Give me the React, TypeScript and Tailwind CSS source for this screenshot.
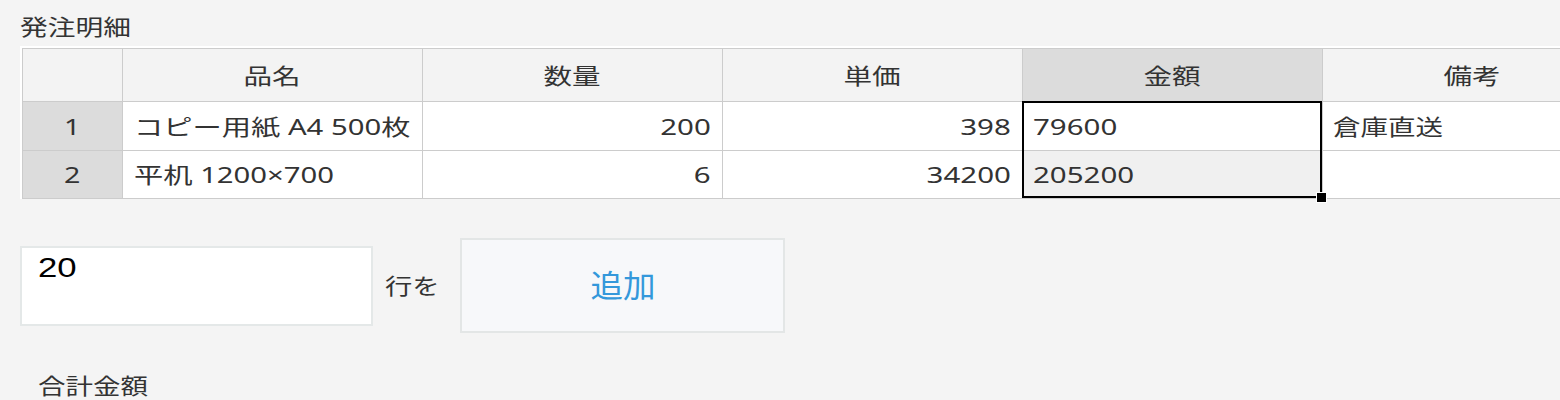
import React from "react";

const FONT = { fontFamily: '"Noto Sans", "Noto Sans CJK JP", sans-serif' };

type Row = {
  n: number;
  name: string;
  qty: string;
  price: string;
  amount: string;
  note: string;
};

const rows: Row[] = [
  { n: 1, name: "コピー用紙 A4 500枚", qty: "200", price: "398", amount: "79600", note: "倉庫直送" },
  { n: 2, name: "平机 1200×700", qty: "6", price: "34200", amount: "205200", note: "" },
];

const headers = ["品名", "数量", "単価", "金額", "備考"];

export default function App() {
  return (
    <div
      className="min-h-screen w-full overflow-hidden bg-[#f4f4f4] pl-5 pt-[7px] text-[#333333]"
      style={FONT}
    >
      <div className="text-[22px] leading-[39px]">
        <span className="inline-block origin-left scale-x-[1.26]">発注明細</span>
      </div>

      {/* Grid */}
      <div className="relative w-max border-l-2 border-t-2 border-white">
        {/* header row */}
        <div className="flex h-[54px] text-[22px]">
          <div className="h-full w-[101px] border-x border-y border-[#cccccc] bg-[#f3f3f3]" />
          {headers.map((h) => (
            <div
              key={h}
              className={
                h === "金額"
                  ? "flex h-full w-[300px] items-center justify-center border-y border-r border-[#cccccc] bg-[#dcdcdc]"
                  : "flex h-full w-[300px] items-center justify-center border-y border-r border-[#cccccc] bg-[#f3f3f3]"
              }
            >
              <span className="inline-block scale-x-[1.3]">{h}</span>
            </div>
          ))}
        </div>
        {rows.map((r, i) => (
          <div
            key={r.n}
            className={i === 0 ? "flex h-[49px] text-[22px]" : "flex h-[48px] text-[22px]"}
          >
            <div className="flex h-full w-[101px] items-center justify-center border-x border-b border-[#cccccc] bg-[#dcdcdc]">
              <span className="inline-block scale-x-[1.3]">{r.n}</span>
            </div>
            <div className="flex h-full w-[300px] items-center border-b border-r border-[#cccccc] bg-white pl-[11px]">
              <span className="inline-block origin-left scale-x-[1.33]">{r.name}</span>
            </div>
            <div className="flex h-full w-[300px] items-center justify-end border-b border-r border-[#cccccc] bg-white pr-[11px]">
              <span className="inline-block origin-right scale-x-[1.34]">{r.qty}</span>
            </div>
            <div className="flex h-full w-[300px] items-center justify-end border-b border-r border-[#cccccc] bg-white pr-[11px]">
              <span className="inline-block origin-right scale-x-[1.34]">{r.price}</span>
            </div>
            <div
              className={
                i === 0
                  ? "flex h-full w-[300px] items-center border-b border-r border-[#cccccc] bg-white pl-[10px]"
                  : "flex h-full w-[300px] items-center border-b border-r border-[#cccccc] bg-[#f0f0f0] pl-[10px]"
              }
            >
              <span className="inline-block origin-left scale-x-[1.34]">{r.amount}</span>
            </div>
            <div className="flex h-full w-[300px] items-center border-b border-r border-[#cccccc] bg-white pl-[10px]">
              <span className="inline-block origin-left scale-x-[1.25]">{r.note}</span>
            </div>
          </div>
        ))}

        {/* selection overlay */}
        <div className="pointer-events-none absolute left-[1000px] top-[53px] h-[97px] w-[300px] border-2 border-black" />
        <div className="pointer-events-none absolute left-[1294px] top-[144px] h-[11px] w-[11px] border border-white bg-black" />
      </div>

      {/* add rows */}
      <div className="mt-[39px] flex items-center">
        <div
          className="h-[80px] w-[353px] border-2 border-[#e4e8e8] bg-white pl-[16px] pt-[4px] text-[28px] leading-[32px] text-black"
          style={{ fontFamily: '"Liberation Sans", Arial, sans-serif' }}
        >
          <span className="inline-block origin-left scale-x-[1.24]">20</span>
        </div>
        <div className="ml-[12px] w-[63px] text-[22px]">
          <span className="inline-block origin-left scale-x-[1.24]">行を</span>
        </div>
        <button
          type="button"
          className="ml-[12px] flex h-[95px] w-[325px] items-center justify-center border-2 border-[#e3e6e6] bg-[#f7f8fa] text-[31px] text-[#3498db]"
        >
          <span className="inline-block scale-x-[1.05]">追加</span>
        </button>
      </div>

      <div className="mt-[35px] pl-[18px] text-[22px] leading-[34px]">
        <span className="inline-block origin-left scale-x-[1.25]">合計金額</span>
      </div>
    </div>
  );
}
